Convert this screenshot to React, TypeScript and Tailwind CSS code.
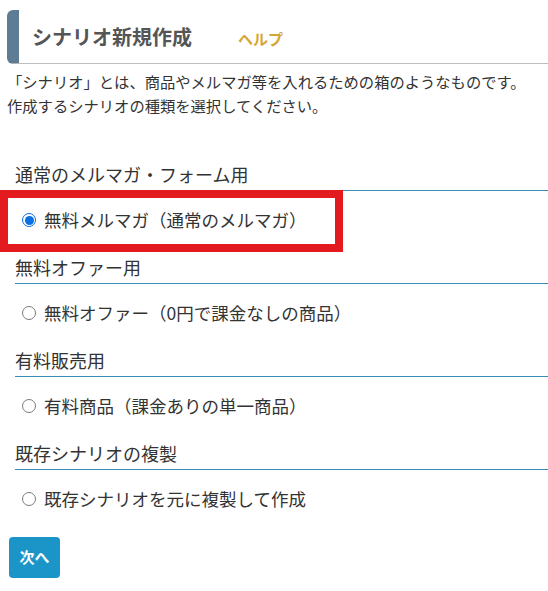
import React from "react";

const sections = [
  { heading: "通常のメルマガ・フォーム用", option: "無料メルマガ（通常のメルマガ）", checked: true },
  { heading: "無料オファー用", option: "無料オファー（0円で課金なしの商品）", checked: false },
  { heading: "有料販売用", option: "有料商品（課金ありの単一商品）", checked: false },
  { heading: "既存シナリオの複製", option: "既存シナリオを元に複製して作成", checked: false },
];

const Radio = ({ checked }: { checked: boolean }) =>
  checked ? (
    <span className="flex h-[14px] w-[14px] items-center justify-center rounded-full border-[1.5px] border-[#0b6fe0] bg-white">
      <span className="h-[9px] w-[9px] rounded-full bg-[#0b6fe0]" />
    </span>
  ) : (
    <span className="h-[14px] w-[14px] rounded-full border border-[#7a7a7a] bg-white" />
  );

const App = () => {
  return (
    <div
      className="relative min-h-[591px] w-[548px] bg-white text-[#333]"
      style={{ fontFamily: '"Noto Sans CJK JP", "Noto Sans", sans-serif' }}
    >
      <div className="pt-[10px]">
        <div className="ml-[7px] flex h-[54px] items-center rounded-l-[6px] border-l-[12px] border-b border-l-[#5e7d95] border-b-[#bdbdbd] pl-[13px]">
          <h1 className="text-[20px] font-bold leading-none text-[#555]">シナリオ新規作成</h1>
          <a className="ml-[46px] mt-[3px] text-[15px] font-bold leading-none text-[#d4a631]">ヘルプ</a>
        </div>
      </div>

      <p className="mt-[5px] pl-[7px] text-[15.3px] leading-[24px]">
        「シナリオ」とは、商品やメルマガ等を入れるための箱のようなものです。
        <br />
        作成するシナリオの種類を選択してください。
      </p>

      <div className="mt-[46px] pl-[15px]">
        {sections.map((s) => (
          <div key={s.heading}>
            <div className="border-b border-[#3a8db5] pb-[4px] text-[18px] leading-[23px]">{s.heading}</div>
            <label className="flex items-center pb-[24px] pl-[7px] pt-[17px] text-[17.5px] leading-[24px]">
              <Radio checked={s.checked} />
              <span className="ml-[8px]">{s.option}</span>
            </label>
          </div>
        ))}
      </div>

      <div className="pl-[9px] pt-[2px]">
        <button className="h-[41px] w-[51px] rounded-[4px] bg-[#1b95c8] text-[15px] font-bold text-white">
          次へ
        </button>
      </div>

      <div className="absolute left-0 top-[190px] h-[62px] w-[343px] border-[8px] border-[#e31b1f]" />
    </div>
  );
};

export default App;
